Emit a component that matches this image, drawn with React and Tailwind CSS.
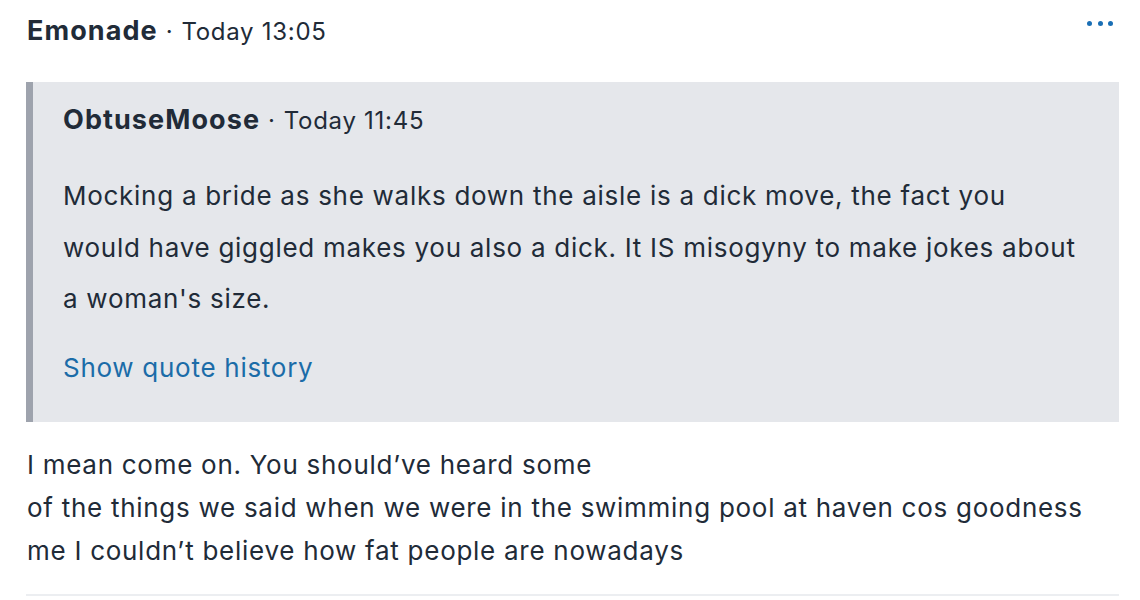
import React from "react";

const fontStack = { fontFamily: "Inter, 'Noto Sans', sans-serif" };

function MoreDots() {
  return (
    <button className="flex items-center gap-[5.5px] pt-[21px]">
      <span className="w-[5px] h-[5px] rounded-full bg-[#1a6fb5]" />
      <span className="w-[5px] h-[5px] rounded-full bg-[#1a6fb5]" />
      <span className="w-[5px] h-[5px] rounded-full bg-[#1a6fb5]" />
    </button>
  );
}

function Byline({ name, time }) {
  return (
    <div className="flex items-baseline h-[39px] leading-[39px] overflow-visible">
      <span className="text-[27px] font-bold tracking-[0.04em]">{name}</span>
      <span className="text-[24px] mx-[8px]">·</span>
      <span className="text-[24px]">{time}</span>
    </div>
  );
}

export default function App() {
  return (
    <div
      className="w-[1140px] h-[600px] bg-white text-[#212b38] overflow-hidden tracking-[0.045em]"
      style={fontStack}
    >
      <div className="pl-[26px] pr-[21px]">
        {/* Post header */}
        <div className="flex items-start justify-between">
          <div className="pt-[11px] pl-px">
            <Byline name="Emonade" time="Today 13:05" />
          </div>
          <div className="pr-[6px]">
            <MoreDots />
          </div>
        </div>

        {/* Quote */}
        <div className="mt-[32px] bg-[#e5e7eb] border-l-[7px] border-[#9ea3ad] pl-[30px] pt-[18px] pb-[35px]">
          <Byline name="ObtuseMoose" time="Today 11:45" />
          <p className="mt-[31px] text-[26px] leading-[51.5px] whitespace-nowrap">
            Mocking a bride as she walks down the aisle is a dick move, the fact you
            <br />
            would have giggled makes you also a dick. It IS misogyny to make jokes about
            <br />
            a woman's size.
          </p>
          <a className="block mt-[23.5px] text-[26px] leading-[39px] text-[#1b6ca8]">
            Show quote history
          </a>
        </div>

        {/* Reply body */}
        <p className="mt-[21px] text-[26px] leading-[43px] pl-px whitespace-nowrap">
          I mean come on. You should’ve heard some
          <br />
          of the things we said when we were in the swimming pool at haven cos goodness
          <br />
          me I couldn’t believe how fat people are nowadays
        </p>

        <div className="mt-[22px] h-[2px] bg-[#eceef1]" />
      </div>
    </div>
  );
}
